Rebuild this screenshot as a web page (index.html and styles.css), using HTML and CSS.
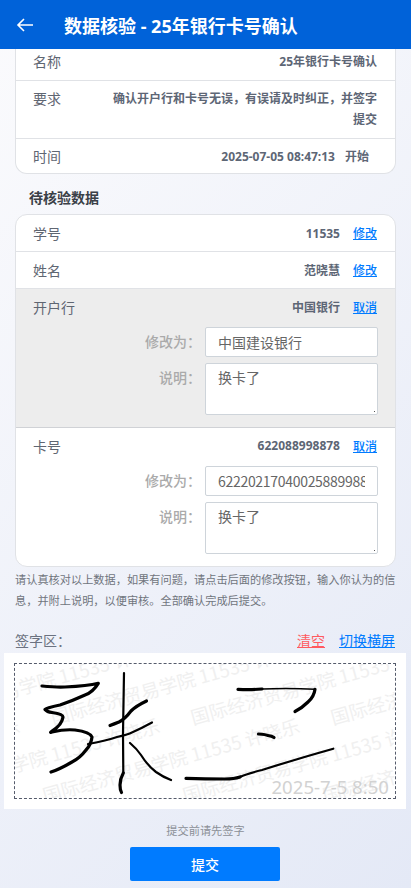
FILE: index.html
```html
<!DOCTYPE html>
<html lang="zh">
<head>
<meta charset="utf-8">
<title>数据核验</title>
<link rel="stylesheet" href="styles.css">
</head>
<body>
<header class="topbar">
  <svg class="back" width="18" height="16" viewBox="0 0 18 16"><path d="M17 8H2M8 2 2 8l6 6" fill="none" stroke="#fff" stroke-width="1.6"/></svg>
  <h1>数据核验 - 25年银行卡号确认</h1>
</header>
<main class="page">
  <section class="card info">
    <div class="row name"><span class="label">名称</span><span class="value">25年银行卡号确认</span></div>
    <div class="row req"><span class="label">要求</span><span class="value">确认开户行和卡号无误，有误请及时纠正，并签字提交</span></div>
    <div class="row time"><span class="label">时间</span><span class="value">2025-07-05 08:47:13<i class="state">开始</i></span></div>
  </section>
  <h2 class="section-title">待核验数据</h2>
  <section class="card data">
    <div class="row"><span class="label">学号</span><span class="value">11535</span><a class="link">修改</a></div>
    <div class="row"><span class="label">姓名</span><span class="value">范晓慧</span><a class="link">修改</a></div>
    <div class="editing grey">
      <div class="row plain"><span class="label">开户行</span><span class="value">中国银行</span><a class="link">取消</a></div>
      <div class="field"><label>修改为：</label><input value="中国建设银行"></div>
      <div class="field"><label>说明：</label><textarea>换卡了</textarea></div>
    </div>
    <div class="editing">
      <div class="row plain"><span class="label">卡号</span><span class="value">622088998878</span><a class="link">取消</a></div>
      <div class="field"><label>修改为：</label><input class="cardno" value="6222021704002588998878"></div>
      <div class="field"><label>说明：</label><textarea>换卡了</textarea></div>
    </div>
  </section>
  <p class="note">请认真核对以上数据，如果有问题，请点击后面的修改按钮，输入你认为的信息，并附上说明，以便审核。全部确认完成后提交。</p>
  <div class="sign-head"><span>签字区：</span><a class="clear">清空</a><a class="rotate">切换横屏</a></div>
  <div class="sign-wrap">
    <svg class="canvas" viewBox="15 664 380 134">
      <g class="wm">
        <text transform="translate(-87 725) rotate(-15.5)">国际经济贸易学院 11535 许晓乐</text>
        <text transform="translate(53 725) rotate(-15.5)">国际经济贸易学院 11535 许晓乐</text>
        <text transform="translate(193 725) rotate(-15.5)">国际经济贸易学院 11535 许晓乐</text>
        <text transform="translate(333 725) rotate(-15.5)">国际经济贸易学院 11535 许晓乐</text>
        <text transform="translate(-235 803) rotate(-15.5)">国际经济贸易学院 11535 许晓乐</text>
        <text transform="translate(-95 803) rotate(-15.5)">国际经济贸易学院 11535 许晓乐</text>
        <text transform="translate(45 803) rotate(-15.5)">国际经济贸易学院 11535 许晓乐</text>
        <text transform="translate(185 803) rotate(-15.5)">国际经济贸易学院 11535 许晓乐</text>
        <text transform="translate(325 803) rotate(-15.5)">国际经济贸易学院 11535 许晓乐</text>
      </g>
      <text class="stamp" x="389" y="793.5">2025-7-5 8:50</text>
      <g class="ink">
        <path class="w3" d="M42 686Q57 687.5 65 687Q88 686 98.3 683.3Q93 692 85 695Q72 701 60 705Q46 708 45 709.5Q47 712 52 712.5Q63 714 63 717Q62 725 52 731Q49 733 52 732Q65 729 75 730Q90 732 92 737Q91 745 86 750Q80 758 72 762Q60 769 51 772"/>
        <path class="w2" d="M88 744Q105 741 117 737Q127 735 133 732Q142 728 152 722.5"/>
        <path class="w2" d="M124 673L123 733L123.3 773"/>
        <path class="w3" d="M123.3 773Q120 779 120 785Q120 790 121.5 792.5"/>
        <path class="w3" d="M146.5 701Q136 706 131 711Q125 719 119 722Q114 724 110 725.5"/>
        <path class="w2" d="M130 743Q137 749 141 755Q148 766 156 772Q163 777 171 780"/>
        <path class="w3" d="M186 778.3Q205 779 225 779Q234 779 240 777"/>
        <path class="w2" d="M240 777Q246 774 262 770Q300 758 333.3 748.7"/>
        <path class="w3" d="M238 689.3Q250 690 262 689"/>
        <path class="w1" d="M262 689Q290 688 315 689.3"/>
        <path class="w3" d="M315 689.3Q314 697 308 702Q302 708 295 711.5"/>
        <path class="w3" d="M258.5 734Q266 734.5 268 735.5Q272 736 274 737.5"/>
      </g>
    </svg>
  </div>
  <p class="hint">提交前请先签字</p>
  <button class="submit">提交</button>
</main>
</body>
</html>
```
FILE: styles.css
```css
* { box-sizing: border-box; }
html, body { margin: 0; height: 888px; overflow: hidden; }
body { font-family: "Noto Sans", "Noto Sans CJK SC", sans-serif; background: linear-gradient(135deg, #fbfbfd, #e4e9f6); color: #5f6672; }
.topbar { height: 49px; background: #0062d9; display: flex; align-items: center; padding-left: 16px; }
.back { flex: none; }
.topbar h1 { margin: 0 0 0 30px; font-size: 18px; font-weight: 700; color: #fff; }
.page { padding: 0 15px; }
.card { background: #fff; border: 1px solid #e0e2e6; border-radius: 12px; overflow: hidden; }
.info { border-top: 0; border-radius: 0 0 12px 12px; }
.row { display: flex; align-items: center; padding: 0 18px 0 17px; height: 37px; border-bottom: 1px solid #e0e2e6; font-size: 14px; }
.row:last-child { border-bottom: 0; }
.label { flex: none; width: 80px; }
.value { flex: 1; text-align: right; font-size: 12px; font-weight: 700; color: #5d6675; }
.link { margin-left: 13px; font-size: 12px; font-weight: 500; color: #007bff; text-decoration: underline; }
.name { height: 32px; padding-bottom: 7px; }
.req { height: 58px; align-items: flex-start; padding-top: 7px; }
.req .label { line-height: 21px; }
.req .value { line-height: 21px; }
.time { height: 34px; }
.state { font-style: normal; margin: 0 8px 0 10px; }
.section-title { margin: 14px 0 6px 14px; font-size: 14px; line-height: 20px; color: #3a3f47; }
.editing { padding-bottom: 12px; border-bottom: 1px solid #d0d2d6; }
.editing:last-child { border-bottom: 0; }
.grey { background: #ededed; }
.row.plain { height: 38px; padding-bottom: 3px; border: 0; }
.field { display: flex; justify-content: flex-end; margin: 0 17px 6px 0; }
.field:last-child { margin-bottom: 0; }
.field label { font-size: 14px; line-height: 30px; color: #aaa; margin-right: 4px; font-weight: 500; }
.field input, .field textarea { width: 173px; font: 14px "Noto Sans CJK SC", sans-serif; color: #666; border: 1px solid #ced4da; border-radius: 2px; padding: 0 12px; }
.field input { height: 30px; background: #fff; }
.cardno { letter-spacing: -0.3px; }
.field textarea { height: 52px; padding-top: 3px; display: block; resize: none; background: linear-gradient(#555, #555) no-repeat right 2px bottom 2px / 1px 1px, #fff; }
.note { margin: 2px 0 0; font-size: 11.2px; line-height: 21px; color: #70757d; }
.sign-head { display: flex; align-items: center; height: 20px; margin-top: 19px; padding-right: 1px; font-size: 14px; color: #6b7280; }
.sign-head span { flex: 1; }
.clear { color: #ff5a5f; text-decoration: underline; margin-right: 14px; }
.rotate { color: #007bff; text-decoration: underline; }
.sign-wrap { margin: 3px -10px 0 -11px; background: #fff; padding: 10px; height: 156px; }
.canvas { display: block; width: 382px; height: 136px; border: 1px dashed #555b6b; }
.wm text { font: 18.7px "Noto Sans CJK SC", sans-serif; fill: #f0f0f0; }
.stamp { font-size: 18.6px; fill: #d2d2d2; text-anchor: end; }
.ink path { fill: none; stroke: #000; stroke-linecap: round; stroke-linejoin: round; }
.w1 { stroke-width: 1.5; }
.w2 { stroke-width: 2.2; }
.w3 { stroke-width: 3.2; }
.hint { text-align: center; font-size: 11.2px; line-height: 16px; margin: 14px 0 8px; color: #8b8f96; }
.submit { display: block; margin: 0 0 0 115px; width: 150px; height: 34px; border: 0; border-radius: 2px; background: #007bff; color: #fff; font: 500 14px "Noto Sans CJK SC", sans-serif; }
```
